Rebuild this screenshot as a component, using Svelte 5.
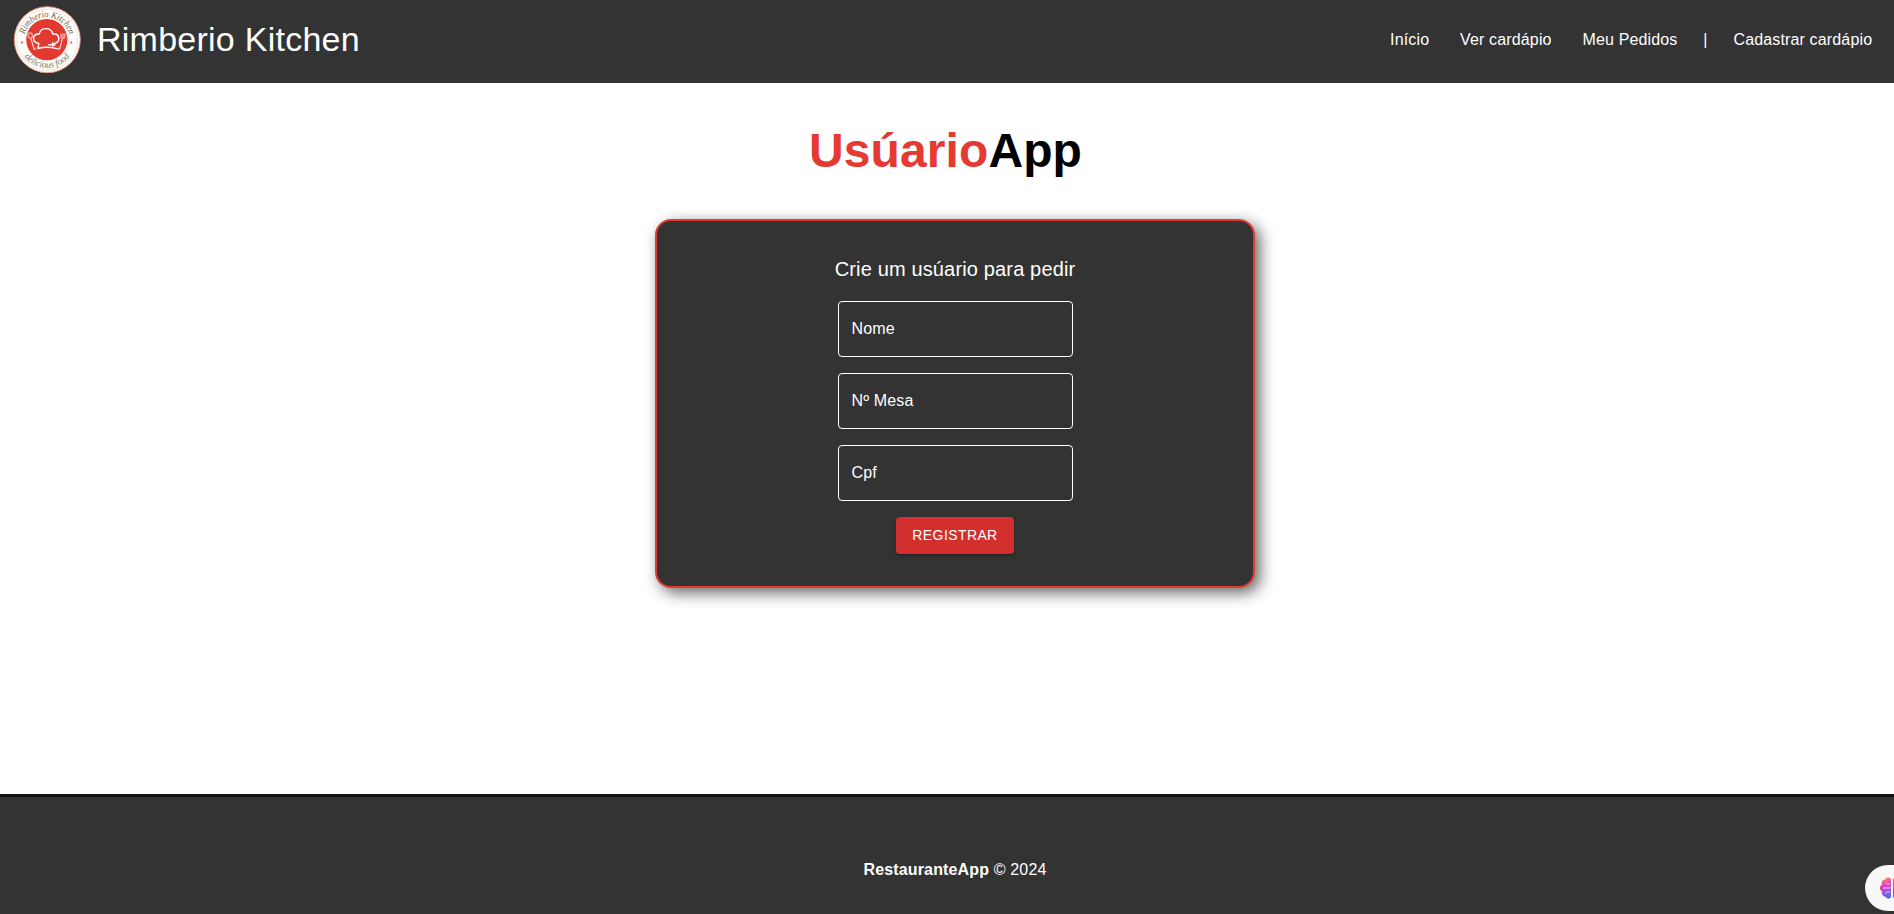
<script>
  const links = ['Início', 'Ver cardápio', 'Meu Pedidos', '|', 'Cadastrar cardápio'];
  const fields = ['Nome', 'Nº Mesa', 'Cpf'];
</script>

<div class="page">
  <header>
    <svg class="logo" viewBox="0 0 68 68" width="68" height="68">
      <defs>
        <path id="arc-top" d="M11.300 34a22.700 22.700 0 0 1 45.400 0" />
        <path id="arc-bottom" d="M6 34a28 28 0 0 0 56 0" />
      </defs>
      <circle cx="34.3" cy="33.7" r="33" fill="#fffdfa" stroke="#ee9a90" stroke-width=".9" />
      <circle cx="34.3" cy="33.7" r="30.600" fill="none" stroke="#f3dcc0" stroke-width=".8" />
      <circle cx="33.8" cy="33.600" r="20.600" fill="#e23a31" />
      <text class="ring"><textPath href="#arc-top" startOffset="50%" text-anchor="middle" textLength="60" lengthAdjust="spacingAndGlyphs">Rimberio Kitchen</textPath></text>
      <text class="ring low"><textPath href="#arc-bottom" startOffset="50%" text-anchor="middle" textLength="53" lengthAdjust="spacingAndGlyphs">delicious food</textPath></text>
      <circle cx="9" cy="36.5" r="1.1" fill="#e2533f" />
      <circle cx="58.3" cy="36.5" r="1.1" fill="#e2533f" />
      <g fill="none" stroke="#fff" stroke-linecap="round" stroke-linejoin="round">
        <path stroke-width="1.4" d="M25.800 37.500C19 36.500 18.500 27.500 26.300 28c1-7.200 12-7.200 13.500 0 7.200-.8 8 7.500 2.200 9.300-1 .4-1.200.8-1.200 1.700M25.800 37.500l-.8 5c6-1.800 12-1.800 19 .2M35.500 38.800h6.500M39.800 36.800v3.500" />
        <path stroke-width="1.100" stroke="#fbd5d0" d="M18 32.500 20.800 42.500c.5 1.300 1.800 1 1.500-.4M49.500 32.500 46.800 42.500c-.5 1.300-1.600 1-1.400-.4" />
        <path stroke-width="1.400" stroke="#f3aaa2" d="M15 29c0-2.700 4-2.700 4.300-.2.200 2-.5 3.200-1.400 3.400-1.400.2-2.900-1.200-2.900-3.200M48 28v3.200c.3 1.500 3 1.500 3.800 0V28M50 28v4" />
      </g>
    </svg>
    <span class="brand">Rimberio Kitchen</span>
    <nav>
      {#each links as link}
        <span class="link" class:bar={link === '|'}>{link}</span>
      {/each}
    </nav>
  </header>

  <main>
    <h1><span>Usúario</span>App</h1>
    <form>
      <h2>Crie um usúario para pedir</h2>
      {#each fields as field}
        <div class="field">{field}</div>
      {/each}
      <button type="button">REGISTRAR</button>
    </form>
  </main>

  <footer><p><b>RestauranteApp</b> © 2024</p></footer>

  <div class="assistant">
    <svg width="26" height="24" viewBox="0 0 26 24">
      <defs>
        <linearGradient id="brain" x1="0" y1="0" x2=".35" y2="1">
          <stop offset="0" stop-color="#ff9a3c" />
          <stop offset=".38" stop-color="#e83fc0" />
          <stop offset="1" stop-color="#4a6cf5" />
        </linearGradient>
      </defs>
      <path fill="url(#brain)" d="M12 3C11 .8 7 .8 6 3.500 3 4 2 6.500 3 8.500.2 10 .2 14 3 15.500c-.6 3 1 5 3.500 5.200C8 23.500 11.500 23 12 21zM14 3c1-2.200 5-2.200 6 .5 3 .5 4 3 3 5 2.800 1.500 2.800 5.500 0 7 .6 3-1 5-3.500 5.200C18 23.500 14.500 23 14 21z" />
      <path fill="none" stroke="#fff" stroke-opacity=".65" stroke-width="1" d="M4 12h8M6 6l2 2h3M6 18l2-2h3" />
    </svg>
  </div>
</div>

<style>
  :global(body) {
    margin: 0;
    background: #fff;
    overflow: hidden;
  }
  .page {
    box-sizing: border-box;
    height: 914px;
    display: flex;
    flex-direction: column;
    font-family: 'Liberation Sans', Arial, sans-serif;
    color: #fff;
  }
  header {
    box-sizing: border-box;
    height: 83px;
    padding: 6px 21.800px 9px 13px;
    display: flex;
    align-items: center;
    background: #333;
  }
  .logo {
    flex: none;
  }
  .ring {
    font: italic 9.500px 'Liberation Serif', serif;
    fill: #6d6253;
  }
  .low {
    fill: #81776a;
  }
  .brand {
    margin: 0 0 2px 16px;
    font-size: 34px;
    letter-spacing: 0.25px;
    line-height: 42px;
  }
  nav {
    margin-left: auto;
    display: flex;
    gap: 30.800px;
    font-size: 16px;
    letter-spacing: 0.15px;
    line-height: 24px;
  }
  .bar {
    margin: 0 -5px;
  }
  main {
    flex: 1;
    display: flex;
    flex-direction: column;
    align-items: center;
  }
  h1 {
    margin: 40px 3px 0 0;
    font-size: 48px;
    line-height: 56px;
    letter-spacing: 0.1px;
    color: #000;
  }
  h1 span {
    color: #e53a32;
  }
  form {
    box-sizing: border-box;
    width: 600px;
    margin: 40px 0 0 16px;
    padding: 32px;
    display: flex;
    flex-direction: column;
    align-items: center;
    gap: 16px;
    background: #333;
    border: 2px solid #e53a32;
    border-radius: 16px;
    box-shadow: 5px 5px 15px rgba(0, 0, 0, 0.6);
  }
  h2 {
    margin: 0;
    font-size: 20px;
    font-weight: 400;
    line-height: 32px;
    letter-spacing: 0.15px;
  }
  .field {
    box-sizing: border-box;
    width: 235px;
    height: 56px;
    padding: 0 13px;
    display: flex;
    align-items: center;
    border: 1px solid #fff;
    border-radius: 4px;
    font-size: 16px;
    letter-spacing: 0.15px;
  }
  button {
    height: 36.500px;
    padding: 6px 16px;
    border: 0;
    border-radius: 4px;
    background: #d32f2f;
    color: #fff;
    font: 14px/24.500px 'Liberation Sans', Arial, sans-serif;
    letter-spacing: 0.4px;
    box-shadow: 0 3px 1px -2px rgba(0, 0, 0, 0.2), 0 2px 2px rgba(0, 0, 0, 0.14), 0 1px 5px rgba(0, 0, 0, 0.12);
  }
  footer {
    box-sizing: border-box;
    height: 120px;
    padding-left: 16px;
    background: #333;
    border-top: 3px solid #111;
    text-align: center;
    font-size: 16px;
    line-height: 24px;
    letter-spacing: 0.15px;
  }
  footer p {
    margin: 61px 0 0;
  }
  .assistant {
    position: absolute;
    left: 1865px;
    top: 865px;
    width: 29px;
    height: 46px;
    box-sizing: border-box;
    padding-left: 14px;
    display: flex;
    align-items: center;
    overflow: hidden;
    background: #f8f8f8;
    border-radius: 23px 0 0 23px;
  }
  .assistant svg {
    flex: none;
  }
</style>
